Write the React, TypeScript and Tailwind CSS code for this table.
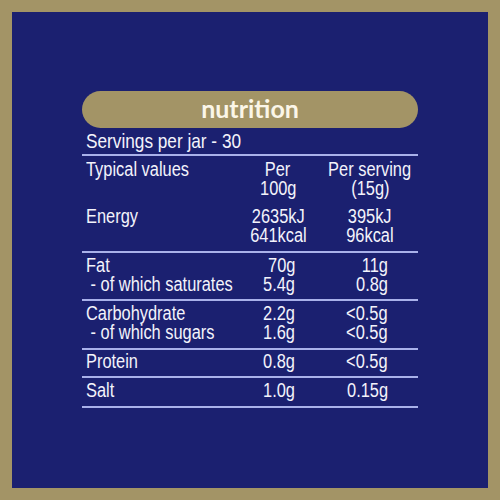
import React from "react";

const FONT = { fontFamily: '"Liberation Sans", Arial, sans-serif' };

type Align = "left" | "center" | "right";

// condensed text: Liberation Sans squeezed horizontally
const Narrow = ({ text, align }: { text: string; align: Align }) => {
  const justify = align === "left" ? "justify-start" : align === "center" ? "justify-center" : "justify-end";
  const origin = align === "left" ? "origin-left" : align === "center" ? "origin-center" : "origin-right";
  return (
    <div className={`flex ${justify}`}>
      <span className={`inline-block whitespace-pre scale-x-[0.82] ${origin}`}>{text}</span>
    </div>
  );
};

type Row = { label: string[]; per100: string[]; serving: string[]; center?: boolean };

const Cells = ({ row }: { row: Row }) => (
  <div className="flex text-[20px] leading-[19px] text-[#f3f3fb]">
    <div className="w-[158px] pl-[4px]">
      {row.label.map((t, i) => (
        <Narrow key={i} text={t} align="left" />
      ))}
    </div>
    <div className={row.center ? "w-[76px]" : "w-[76px] pr-[21px]"}>
      {row.per100.map((t, i) => (
        <Narrow key={i} text={t} align={row.center ? "center" : "right"} />
      ))}
    </div>
    <div className={row.center ? "ml-[10px] w-[88px]" : "ml-[10px] w-[88px] pr-[26px]"}>
      {row.serving.map((t, i) => (
        <Narrow key={i} text={t} align={row.center ? "center" : "right"} />
      ))}
    </div>
  </div>
);

const App = () => {
  return (
    <div className="w-[500px] h-[500px] bg-[#a39466] p-[12px]" style={FONT}>
      <div className="h-full bg-[#1b2070] px-[70px] pt-[79px]">
        <div className="h-[37px] rounded-full bg-[#a39466] flex items-center justify-center">
          <span
            className="text-[25px] font-bold text-[#fbf6e8] leading-none pb-[2px]"
            style={{ fontFamily: "Lato, 'Open Sans', sans-serif" }}
          >
            nutrition
          </span>
        </div>
        <div className="h-[26px] flex items-center pl-[4px] text-[21px] text-[#f3f3fb] border-b-2 border-[#a9b1ea] box-content">
          <span className="inline-block whitespace-pre scale-x-[0.82] origin-left">Servings per jar - 30</span>
        </div>

        <div className="pt-[4px] pb-[6px] border-b-2 border-[#a9b1ea]">
          <Cells row={{ label: ["Typical values"], per100: ["Per", "100g"], serving: ["Per serving", "(15g)"], center: true }} />
          <div className="mt-[9px]">
            <Cells row={{ label: ["Energy"], per100: ["2635kJ", "641kcal"], serving: ["395kJ", "96kcal"], center: true }} />
          </div>
        </div>

        <div className="pt-[3px] pb-[5px] border-b-2 border-[#a9b1ea]">
          <Cells row={{ label: ["Fat", " - of which saturates"], per100: ["70g", "5.4g"], serving: ["11g", "0.8g"] }} />
        </div>

        <div className="pt-[3px] pb-[6px] border-b-2 border-[#a9b1ea]">
          <Cells row={{ label: ["Carbohydrate", " - of which sugars"], per100: ["2.2g", "1.6g"], serving: ["<0.5g", "<0.5g"] }} />
        </div>

        <div className="pt-[2px] pb-[5px] border-b-2 border-[#a9b1ea]">
          <Cells row={{ label: ["Protein"], per100: ["0.8g"], serving: ["<0.5g"] }} />
        </div>

        <div className="pt-[3px] pb-[6px] border-b-2 border-[#a9b1ea]">
          <Cells row={{ label: ["Salt"], per100: ["1.0g"], serving: ["0.15g"] }} />
        </div>
      </div>
    </div>
  );
};

export default App;
